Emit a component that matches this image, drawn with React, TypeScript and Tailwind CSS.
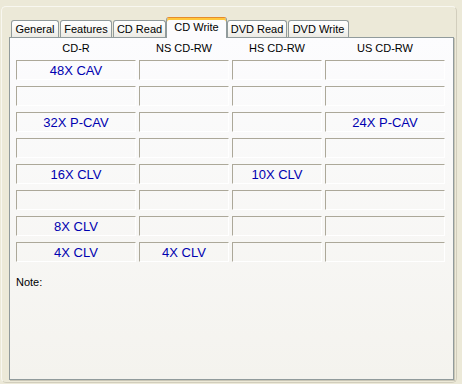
import React from "react";

const rows: string[][] = [
  ["48X CAV", "", "", ""],
  ["", "", "", ""],
  ["32X P-CAV", "", "", "24X P-CAV"],
  ["", "", "", ""],
  ["16X CLV", "", "10X CLV", ""],
  ["", "", "", ""],
  ["8X CLV", "", "", ""],
  ["4X CLV", "4X CLV", "", ""],
];

const headers = ["CD-R", "NS CD-RW", "HS CD-RW", "US CD-RW"];

function Tab({ label, w, ml }: { label: string; w: string; ml: string }) {
  return (
    <div
      className={`${w} ${ml} h-[17px] flex items-center justify-center rounded-t-[3px] border border-b-0 border-[#919b9c] bg-gradient-to-b from-[#ffffff] via-[#f8f8f5] to-[#eceae4] text-[11px] leading-none text-black`}
    >
      {label}
    </div>
  );
}

export default function App() {
  return (
    <div
      className="w-[462px] h-[384px] bg-[#ece9d8] pt-[6px] pl-[1px] overflow-hidden"
      style={{ fontFamily: '"Liberation Sans", Arial, sans-serif' }}
    >
      <div className="w-[456px] h-[377px] rounded-[5px] border border-t-[#f8f7f0] border-l-[#f8f7f0] border-r-[#d2cebd] border-b-[#d2cebd] pt-[10px] pl-[7px]">
        <div className="flex items-end h-[20px]">
          <Tab label="General" w="w-[48px]" ml="ml-[2px]" />
          <Tab label="Features" w="w-[52px]" ml="ml-[1px]" />
          <Tab label="CD Read" w="w-[53px]" ml="ml-[1px]" />
          <div className="relative z-10 w-[61px] h-[21px] -mb-[1px] flex items-center justify-center rounded-t-[3px] border border-b-0 border-[#919b9c] border-t-[#e68b2c] bg-[#fcfcfe] shadow-[inset_0_2px_0_#ffc73c] text-[11px] leading-none text-black pb-[1px]">
            CD Write
          </div>
          <Tab label="DVD Read" w="w-[60px]" ml="ml-0" />
          <Tab label="DVD Write" w="w-[61px]" ml="ml-[1px]" />
        </div>
        <div className="w-[445px] h-[343px] border border-[#919b9c] bg-gradient-to-b from-[#fcfcfe] to-[#f4f3ee] shadow-[1px_1px_0_#c9c6b6] pl-[6px]">
          <div className="grid grid-cols-[120px_90px_90px_120px] gap-x-[3px] h-[20px]">
            {headers.map((h) => (
              <div key={h} className="flex items-center justify-center text-[11px] leading-none text-black">
                {h}
              </div>
            ))}
          </div>
          <div className="mt-[2px] grid grid-cols-[120px_90px_90px_120px] gap-x-[3px] gap-y-[6px]">
            {rows.map((r, i) =>
              r.map((c, j) => (
                <div
                  key={`${i}-${j}`}
                  className="h-[20px] border border-t-[#aca899] border-l-[#aca899] border-r-white border-b-white flex items-center justify-center text-[13px] leading-none text-[#0000b0]"
                >
                  {c}
                </div>
              ))
            )}
          </div>
          <div className="mt-[13px] text-[11px] leading-[14px] text-black">Note:</div>
        </div>
      </div>
    </div>
  );
}
